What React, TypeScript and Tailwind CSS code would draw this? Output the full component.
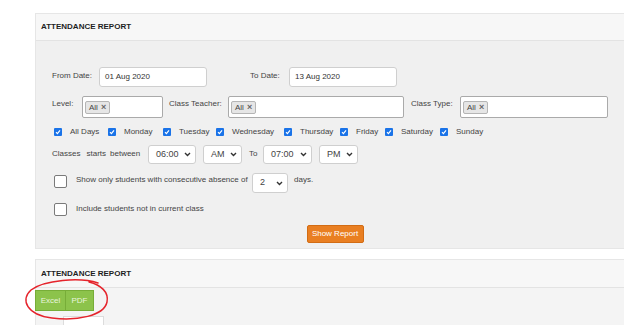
import React from "react";

const Chevron = () => (
	<svg width="7" height="5" viewBox="0 0 7 5" className="shrink-0">
		<path d="M1 1 L3.5 3.5 L6 1" fill="none" stroke="#333" strokeWidth="1.4" />
	</svg>
);

const Select = ({value, w}: {value: string; w: string}) => (
	<div
		className={`${w} h-full flex items-center justify-between bg-white border border-[#cfcfcf] rounded-[3px] pl-[7px] pr-[4px] text-[9px] text-[#444]`}
	>
		<span>{value}</span>
		<Chevron />
	</div>
);

const Tag = () => (
	<div className="flex items-center h-[13px] px-[3px] gap-[3px] bg-[#e6e6e6] border border-[#b5b5b5] rounded-[2px] text-[8px] text-[#444]">
		<span>All</span>
		<span className="font-bold text-[#666] text-[9px] leading-none">×</span>
	</div>
);

const days = [
	{label: "All Days", w: "w-[54px]"},
	{label: "Monday", w: "w-[55px]"},
	{label: "Tuesday", w: "w-[53px]"},
	{label: "Wednesday", w: "w-[68px]"},
	{label: "Thursday", w: "w-[56px]"},
	{label: "Friday", w: "w-[45px]"},
	{label: "Saturday", w: "w-[55px]"},
	{label: "Sunday", w: "w-[60px]"},
];

const Checked = () => (
	<span className="w-[8px] h-[8px] rounded-[1px] bg-[#1a73e8] flex items-center justify-center shrink-0">
		<svg width="6" height="6" viewBox="0 0 6 6">
			<path d="M1 3.2 L2.4 4.6 L5 1.4" fill="none" stroke="white" strokeWidth="1.2" />
		</svg>
	</span>
);

const BigBox = () => (
	<div className="w-[13px] h-[13px] bg-white border border-[#7a7a7a] rounded-[2px] shrink-0" />
);

export default function App() {
	return (
		<div
			className="relative w-[624px] h-[325px] overflow-hidden bg-white"
			style={{fontFamily: '"Liberation Sans", Arial, sans-serif'}}
		>
			{/* filter panel */}
			<div className="mt-[13px] ml-[35px] w-[600px] border border-[#e6e6e6]">
				<div className="h-[27px] flex items-center pl-[5px] bg-[#f7f7f7] border-b border-[#e3e3e3]">
					<span className="text-[8px] font-bold text-[#1e1e1e]">ATTENDANCE REPORT</span>
				</div>
				<div className="bg-[#f0f0f0] pl-[16px] pt-[26px] pb-[5px] text-[8px] text-[#444]">
					{/* dates */}
					<div className="flex h-[20px]">
						<span className="w-[47px] pt-[3px]">From Date:</span>
						<div className="w-[108px] h-full flex items-center bg-white border border-[#cfcfcf] rounded-[3px] pl-[5px] text-[#333]">
							01 Aug 2020
						</div>
						<span className="ml-[43px] w-[39px] pt-[3px]">To Date:</span>
						<div className="w-[108px] h-full flex items-center bg-white border border-[#cfcfcf] rounded-[3px] pl-[5px] text-[#333]">
							13 Aug 2020
						</div>
					</div>

					{/* level / teacher / type */}
					<div className="flex h-[22px] mt-[9px]">
						<span className="w-[30px] pt-[2px]">Level:</span>
						<div className="w-[81px] h-full bg-white border border-[#aaa] rounded-[2px] pl-[2px] pt-[4px]">
							<div className="flex"><Tag /></div>
						</div>
						<span className="ml-[6px] w-[59px] pt-[2px]">Class Teacher:</span>
						<div className="w-[176px] h-full bg-white border border-[#aaa] rounded-[2px] pl-[2px] pt-[4px]">
							<div className="flex"><Tag /></div>
						</div>
						<span className="ml-[7px] w-[49px] pt-[2px]">Class Type:</span>
						<div className="w-[148px] h-full bg-white border border-[#aaa] rounded-[2px] pl-[2px] pt-[4px]">
							<div className="flex"><Tag /></div>
						</div>
					</div>

					{/* days */}
					<div className="flex items-center h-[8px] mt-[10px] ml-[2px]">
						{days.map((d) => (
							<div key={d.label} className={`${d.w} flex items-center shrink-0`}>
								<Checked />
								<span className="ml-[8px] whitespace-nowrap">{d.label}</span>
							</div>
						))}
					</div>

					{/* times */}
					<div className="flex h-[19px] mt-[9px]">
						<div className="w-[96px] pt-[3px] flex">
							<span>Classes</span>
							<span className="ml-[6px]">starts</span>
							<span className="ml-[4px]">between</span>
						</div>
						<Select value="06:00" w="w-[48px]" />
						<div className="ml-[7px] h-full"><Select value="AM" w="w-[39px]" /></div>
						<span className="ml-[7px] w-[14px] pt-[3px]">To</span>
						<Select value="07:00" w="w-[49px]" />
						<div className="ml-[7px] h-full"><Select value="PM" w="w-[39px]" /></div>
					</div>

					{/* absence */}
					<div className="flex h-[20px] mt-[9px]">
						<div className="ml-[2px] mt-[2px]"><BigBox /></div>
						<span className="ml-[9px] w-[176px] pt-[1px]">Show only students with consecutive absence of</span>
						<div className="w-[36px] h-full flex items-center justify-between bg-white border border-[#cfcfcf] rounded-[3px] pl-[7px] pr-[4px] text-[9px]">
							<span>2</span>
							<Chevron />
						</div>
						<span className="ml-[6px] pt-[1px]">days.</span>
					</div>

					<div className="flex h-[13px] mt-[10px]">
						<div className="ml-[2px]"><BigBox /></div>
						<span className="ml-[9px]">Include students not in current class</span>
					</div>

					<div className="flex justify-center mt-[9px] -ml-[16px]">
						<button className="w-[57px] h-[18px] bg-[#e97f22] border border-[#d26c14] rounded-[2px] text-white text-[8px]">
							Show Report
						</button>
					</div>
				</div>
			</div>

			{/* results panel */}
			<div className="mt-[10px] ml-[35px] w-[600px] border border-[#e6e6e6]">
				<div className="h-[28px] flex items-center pl-[5px] bg-[#f7f7f7] border-b border-[#e3e3e3]">
					<span className="text-[8px] font-bold text-[#1e1e1e]">ATTENDANCE REPORT</span>
				</div>
				<div className="bg-[#f4f4f4] pt-[2px] h-[60px]">
					<div className="flex -ml-[1px]">
						<button className="w-[31px] h-[21px] bg-[#8cc34b] border border-[#77ad38] text-[8px] text-[#e9f5dc]">
							Excel
						</button>
						<button className="w-[28px] h-[21px] bg-[#8cc34b] border border-l-0 border-[#77ad38] text-[8px] text-[#e9f5dc]">
							PDF
						</button>
					</div>
					<div className="mt-[5px] ml-[27px] w-[41px] h-[12px] bg-white border border-[#dcdcdc]" />
				</div>
			</div>

			{/* red annotation */}
			<svg className="absolute left-0 top-0 pointer-events-none" width="624" height="325">
				<path
					d="M98 283 C80 277 44 280 31 290 C20 300 27 315 52 318 C77 321 104 316 107 302 C109 292 101 285 89 282"
					fill="none"
					stroke="#e5232b"
					strokeWidth="1.5"
					strokeLinecap="round"
				/>
			</svg>
		</div>
	);
}
